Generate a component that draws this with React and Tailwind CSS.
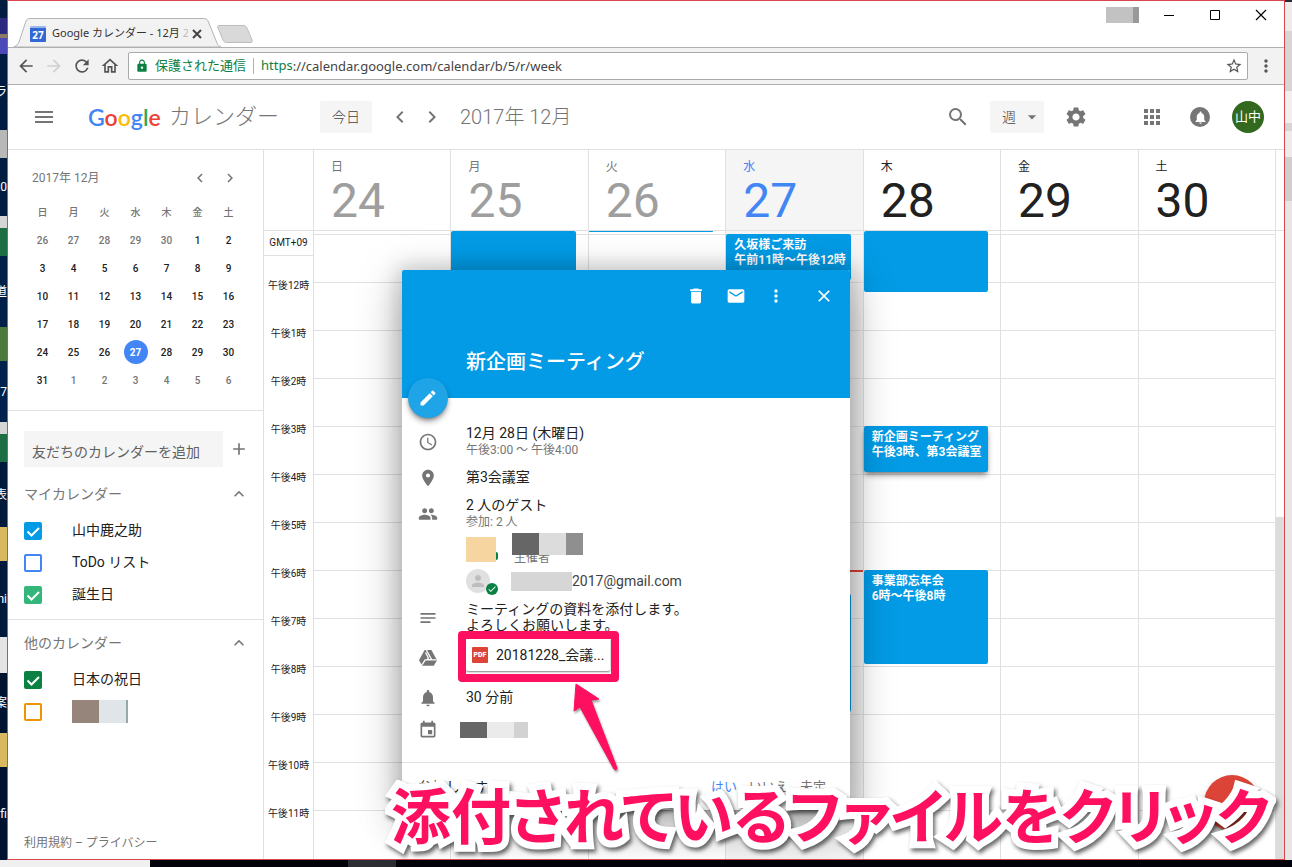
import React, { useState } from 'react';
import {
  MdAdd,
  MdApps,
  MdArrowBack,
  MdArrowDropDown,
  MdArrowForward,
  MdCheck,
  MdChevronLeft,
  MdChevronRight,
  MdClose,
  MdDelete,
  MdEdit,
  MdEmail,
  MdEvent,
  MdExpandLess,
  MdLock,
  MdMenu,
  MdMoreVert,
  MdNotes,
  MdNotifications,
  MdOutlineHome,
  MdPeople,
  MdPerson,
  MdPlace,
  MdRefresh,
  MdSchedule,
  MdSearch,
  MdSettings,
  MdStarBorder
} from 'react-icons/md';

const weekdays = ['日', '月', '火', '水', '木', '金', '土'];

const miniWeeks = [
  [26, 27, 28, 29, 30, 1, 2],
  [3, 4, 5, 6, 7, 8, 9],
  [10, 11, 12, 13, 14, 15, 16],
  [17, 18, 19, 20, 21, 22, 23],
  [24, 25, 26, 27, 28, 29, 30],
  [31, 1, 2, 3, 4, 5, 6]
];

// top / height are pixels from the upper edge of the visible grid
const days = [
  { name: '日', date: 24, state: 'past', events: [] },
  { name: '月', date: 25, state: 'past', events: [{ top: 0, height: 90 }] },
  { name: '火', date: 26, state: 'past', events: [{ top: 0, height: 1 }] },
  {
    name: '水',
    date: 27,
    state: 'today',
    events: [
      { top: 3, height: 46, title: '久坂様ご来訪', time: '午前11時～午後12時' },
      { top: 363, height: 118 }
    ]
  },
  {
    name: '木',
    date: 28,
    state: 'future',
    events: [
      { top: 0, height: 61 },
      { top: 195, height: 46, title: '新企画ミーティング', time: '午後3時、第3会議室', raised: true },
      { top: 339, height: 94, title: '事業部忘年会', time: '6時～午後8時' }
    ]
  },
  { name: '金', date: 29, state: 'future', events: [] },
  { name: '土', date: 30, state: 'future', events: [] }
];

const dayColors = {
  past: { name: 'text-[#757575]', date: 'text-[#9e9e9e]', bg: '' },
  today: { name: 'text-[#4285f4]', date: 'text-[#4285f4]', bg: 'bg-[#f5f5f5]' },
  future: { name: 'text-[#212121]', date: 'text-[#212121]', bg: '' }
};

const hours = ['12', '1', '2', '3', '4', '5', '6', '7', '8', '9', '10', '11'];

const leftDesktop = [
  { h: 'h-[18px]', c: 'bg-[#001c40]' },
  { h: 'h-4', c: 'bg-[#2b2a80]' },
  { h: 'h-1', c: 'bg-[#8d7a68]' },
  { h: 'h-4', c: 'bg-[#4c48b8]' },
  { h: 'h-[76px]', c: 'bg-[#001c40]', t: 'ラ' },
  { h: 'h-7', c: 'bg-[#b8b8b8]' },
  { h: 'h-[58px]', c: 'bg-[#001d42]', t: '20' },
  { h: 'h-3', c: 'bg-[#d5d5d5]' },
  { h: 'h-7', c: 'bg-[#1d6e42]' },
  { h: 'h-[71px]', c: 'bg-[#00204a]', t: '道' },
  { h: 'h-[34px]', c: 'bg-[#4d7a3c]' },
  { h: 'h-[61px]', c: 'bg-[#00224c]', t: '17' },
  { h: 'h-3', c: 'bg-[#d5d5d5]' },
  { h: 'h-7', c: 'bg-[#1d6e42]' },
  { h: 'h-[65px]', c: 'bg-[#001a3c]', t: '表' },
  { h: 'h-[34px]', c: 'bg-[#d8b95f]' },
  { h: 'h-[76px]', c: 'bg-[#001a3c]', t: 'ni' },
  { h: 'h-9', c: 'bg-[#e4e4e4]' },
  { h: 'h-[60px]', c: 'bg-[#00142f]', t: '案' },
  { h: 'h-[34px]', c: 'bg-[#d8b95f]' },
  { h: 'flex-1', c: 'bg-[#001230]', t: 'fi' }
];

const Segments = ({ list, className }) => (
  <div className={`flex shrink-0 flex-col overflow-hidden ${className}`} aria-hidden="true">
    {list.map((s, i) => (
      <div key={i} className={`${s.h} ${s.c} flex shrink-0 items-center justify-end overflow-hidden text-xs text-white`}>
        {s.t}
      </div>
    ))}
  </div>
);

const rightDesktop = [
  { h: 'h-0.5', c: 'bg-[#2c2c34]' },
  { h: 'h-[29px]', c: 'bg-[#ececec]' },
  { h: 'h-[60px]', c: 'bg-[#d6d6d6]' },
  { h: 'h-8', c: 'bg-[#f0f0f0]' },
  { h: 'h-2', c: 'bg-[#d6d6d6]' },
  { h: 'h-[26px]', c: 'bg-[#ececec]' },
  { h: 'h-11', c: 'bg-[#cfcfcf]' },
  { h: 'flex-1', c: 'bg-[#e6e6e6]' }
];

const IconButton = ({ label, className = '', children }) => (
  <button aria-label={label} className={`flex items-center justify-center ${className}`}>
    {children}
  </button>
);

const TitleBar = () => (
  <div className="flex h-[46px] justify-between bg-white">
    <div className="flex items-end">
      <div className="relative z-10 ml-[6px] h-[29px] w-[207px]">
        <svg className="absolute inset-0" width="207" height="29" viewBox="0 0 207 29">
          <path d="M0 28.5 C3 28 4 26 5 24 L12 3 C13 1 14 .5 16 .5 H189 C192 .5 193 1 194 3 L203 25 C204 27.500 205 28.500 207 28.500 V29 H0Z" fill="#f2f2f2" stroke="#b4b4b4" />
        </svg>
        <div className="relative flex h-full items-center pt-0.5 pl-4 font-['Noto_Sans','Noto_Sans_CJK_JP',sans-serif]">
          <span className="flex size-4 items-center justify-center rounded-[1px] border-t-2 border-[#9db8e8] bg-[#3367d6] text-[10px] leading-none font-bold text-white">27</span>
          <span className="ml-[6px] w-[136px] overflow-hidden text-[11px] whitespace-nowrap text-[#333]">
            Google カレンダー - 12月 <span className="text-[#bbb]">2</span>
          </span>
          <IconButton label="タブを閉じる" className="ml-1 text-[#444]">
            <svg width="10" height="10" viewBox="0 0 10 10" stroke="currentColor" strokeWidth="2">
              <path d="M1 1 9 9M9 1 1 9" />
            </svg>
          </IconButton>
        </div>
      </div>
      <button aria-label="新しいタブ" className="mb-1 -ml-1">
        <svg width="36" height="18" viewBox="0 0 36 18">
          <path d="M2 .5H26C28 .5 29 1 30 3L35 15C35.500 17 35 17.500 33 17.500H10C8 17.500 7 17 6 15L1 3C.5 1 1 .5 2 .5Z" fill="#d9d9d9" stroke="#bdbdbd" />
        </svg>
      </button>
    </div>
    <div className="flex h-7 items-center">
      <div className="mr-6 flex h-4" aria-hidden="true">
        <span className="w-[27px] bg-[#c2c2c2]" />
        <span className="w-1.5 bg-[#999]" />
      </div>
      <div className="flex gap-[34px] pr-[17px] text-black">
        <IconButton label="最小化">
          <svg width="12" height="12" viewBox="0 0 12 12" stroke="currentColor"><path d="M1 6.500H11" /></svg>
        </IconButton>
        <IconButton label="最大化">
          <svg width="12" height="12" viewBox="0 0 12 12" stroke="currentColor" fill="none"><path d="M1.500 1.500H10.500V10.500H1.500Z" /></svg>
        </IconButton>
        <IconButton label="閉じる">
          <svg width="12" height="12" viewBox="0 0 12 12" stroke="currentColor" strokeWidth="1.2"><path d="M1 1 11 11M11 1 1 11" /></svg>
        </IconButton>
      </div>
    </div>
  </div>
);

const AddressBar = () => (
  <div className="flex h-[38px] items-center border-y border-[#b0b0b0] bg-[#f2f2f2] pl-2 text-[#555] font-['Noto_Sans','Noto_Sans_CJK_JP',sans-serif]">
    <div className="flex gap-2">
      <IconButton label="戻る"><MdArrowBack size={20} /></IconButton>
      <IconButton label="進む" className="text-[#d0d0d0]"><MdArrowForward size={20} /></IconButton>
      <IconButton label="再読み込み"><MdRefresh size={20} /></IconButton>
      <IconButton label="ホーム"><MdOutlineHome size={20} /></IconButton>
    </div>
    <div className="ml-2 flex h-7 flex-1 items-center rounded-[2px] border border-[#a9a9a9] bg-white pr-1 pl-[6px]">
      <MdLock size={14} className="text-[#0b8043]" />
      <span className="ml-1.5 text-[13px] text-[#0b8043]">保護された通信</span>
      <span className="mx-[7px] h-4 w-px bg-[#b0b0b0]" />
      <label htmlFor="address" className="text-[13px] text-[#0b8043]">https</label>
      <input
        id="address"
        aria-label="アドレス"
        className="h-6 flex-1 text-[13px] text-[#444]"
        defaultValue="://calendar.google.com/calendar/b/5/r/week"
      />
      <IconButton label="ブックマーク"><MdStarBorder size={18} /></IconButton>
    </div>
    <IconButton label="メニュー" className="w-9"><MdMoreVert size={20} /></IconButton>
  </div>
);

const GoogleLogo = () => (
  <span className="w-[75px] font-['Lato',sans-serif] text-[23px] leading-8 font-semibold">
    <span className="text-[#4285f4]">G</span>
    <span className="text-[#ea4335]">o</span>
    <span className="text-[#fbbc05]">o</span>
    <span className="text-[#4285f4]">g</span>
    <span className="text-[#34a853]">l</span>
    <span className="text-[#ea4335]">e</span>
  </span>
);

const Header = () => (
  <header className="flex h-[65px] items-center border-b border-[#e0e0e0] pl-6 text-[#757575]">
    <IconButton label="メインメニュー"><MdMenu size={24} /></IconButton>
    <div className="ml-8 flex w-[232px] items-center gap-1.5">
      <GoogleLogo />
      <span className="text-[22px] leading-8 font-light">カレンダー</span>
    </div>
    <button className="h-8 w-[52px] rounded-[2px] bg-[#f5f5f5] text-sm font-light text-[#424242]">今日</button>
    <div className="ml-4 flex gap-2">
      <IconButton label="前の週"><MdChevronLeft size={24} /></IconButton>
      <IconButton label="次の週"><MdChevronRight size={24} /></IconButton>
    </div>
    <h1 className="ml-4 flex-1 text-xl font-light">2017年 12月</h1>
    <IconButton label="検索"><MdSearch size={24} /></IconButton>
    <div className="relative ml-5 flex items-center">
      <select aria-label="表示" className="h-8 w-[54px] appearance-none rounded-[2px] bg-[#f5f5f5] pl-3 text-sm font-light text-[#424242]">
        <option>週</option>
      </select>
      <MdArrowDropDown size={20} className="pointer-events-none absolute right-0.5" />
    </div>
    <IconButton label="設定" className="ml-5"><MdSettings size={24} /></IconButton>
    <IconButton label="アプリ" className="ml-[52px]"><MdApps size={24} /></IconButton>
    <IconButton label="お知らせ" className="ml-[26px] size-5 rounded-full bg-[#757575] text-white">
      <MdNotifications size={15} />
    </IconButton>
    <button className="mr-5 ml-[22px] size-8 rounded-full bg-[#33691e] text-[13px] text-white">山中</button>
  </header>
);

const MiniCalendar = () => (
  <section className="px-[19px] pt-4">
    <div className="flex h-6 items-center justify-between px-[5px] text-[#757575]">
      <h2 className="text-xs">2017年 12月</h2>
      <div className="flex gap-3">
        <IconButton label="前の月"><MdChevronLeft size={18} /></IconButton>
        <IconButton label="次の月"><MdChevronRight size={18} /></IconButton>
      </div>
    </div>
    <table className="mt-2 w-[217px] table-fixed text-center text-[10px] font-medium text-[#212121]">
      <thead>
        <tr className="h-7 text-[#757575]">
          {weekdays.map((d) => (
            <th key={d} className="p-0 font-medium">{d}</th>
          ))}
        </tr>
      </thead>
      <tbody>
        {miniWeeks.map((week, r) => (
          <tr key={r} className="h-7">
            {week.map((d, c) => {
              const outside = (r === 0 && d > 20) || (r === 5 && d < 10);
              const today = r === 4 && d === 27;
              return (
                <td key={c} className={`p-0 ${outside ? 'text-[#757575]' : ''}`}>
                  {today ? (
                    <span className="mx-auto flex size-6 items-center justify-center rounded-full bg-[#4285f4] font-bold text-white">{d}</span>
                  ) : d}
                </td>
              );
            })}
          </tr>
        ))}
      </tbody>
    </table>
  </section>
);

const CalendarItem = ({ initial, box, label, children }) => {
  const [on, setOn] = useState(initial);
  return (
    <label className="flex h-8 items-center text-sm text-[#212121]">
      <span className="relative mt-0.5 flex size-[18px] text-white">
        <input
          type="checkbox"
          aria-label={label}
          checked={on}
          onChange={() => setOn(!on)}
          className={`size-[18px] appearance-none rounded-[2px] border-2 ${box}`}
        />
        {on && (
          <svg className="pointer-events-none absolute inset-0" width="18" height="18" viewBox="0 0 18 18" fill="none" stroke="currentColor" strokeWidth="2">
            <path d="M3.500 9.500 7.500 13.500 15 6" />
          </svg>
        )}
      </span>
      <span className="ml-[30px]">{children}</span>
    </label>
  );
};

const SectionHead = ({ title }) => (
  <div className="flex h-6 items-center justify-between text-[#757575]">
    <h2 className="text-sm">{title}</h2>
    <IconButton label={`${title}を折りたたむ`}><MdExpandLess size={20} /></IconButton>
  </div>
);

const Sidebar = () => (
  <aside className="flex w-64 shrink-0 flex-col border-r border-[#e0e0e0]">
    <MiniCalendar />
    <section className="mt-4 border-t border-[#e0e0e0] pt-5 pr-[14px] pb-[9px] pl-4">
      <div className="flex h-9 items-center justify-between">
        <input
          aria-label="友だちのカレンダーを追加"
          placeholder="友だちのカレンダーを追加"
          className="h-9 w-[199px] bg-[#f5f5f5] px-2 pt-1.5 text-sm placeholder:text-[#616161]"
        />
        <IconButton label="追加" className="text-[#757575]"><MdAdd size={20} /></IconButton>
      </div>
      <div className="mt-[15px]"><SectionHead title="マイカレンダー" /></div>
      <div className="mt-2">
        <CalendarItem initial box="border-[#039be5] checked:bg-[#039be5]">山中鹿之助</CalendarItem>
        <CalendarItem initial={false} box="border-[#4285f4] checked:bg-[#4285f4]">ToDo リスト</CalendarItem>
        <CalendarItem initial box="border-[#33b679] checked:bg-[#33b679]">誕生日</CalendarItem>
      </div>
    </section>
    <section className="border-t border-[#e0e0e0] pt-[11px] pr-[14px] pl-4">
      <SectionHead title="他のカレンダー" />
      <div className="mt-2">
        <CalendarItem initial box="border-[#0b8043] checked:bg-[#0b8043]">日本の祝日</CalendarItem>
        <CalendarItem initial={false} label="カレンダー" box="border-[#f09300] checked:bg-[#f09300]">
          <span className="flex h-[23px]">
            <span className="w-[27px] bg-[#96857b]" />
            <span className="w-[27px] bg-[#e0e5ea]" />
            <span className="w-0.5 bg-[#94aaa8]" />
          </span>
        </CalendarItem>
      </div>
    </section>
    <footer className="mt-auto px-4 pb-2 text-xs text-[#757575]">
      <a href="#terms">利用規約</a> – <a href="#privacy">プライバシー</a>
    </footer>
  </aside>
);

const DayHeads = () => (
  <div className="flex h-[81px] border-b border-[#e0e0e0]">
    <div className="w-[50px] shrink-0 border-r border-[#e0e0e0]" />
    {days.map((d) => (
      <div key={d.date} className={`flex-1 border-r border-[#e0e0e0] pt-[9px] pl-[17px] ${dayColors[d.state].bg}`}>
        <div className={`text-xs leading-4 ${dayColors[d.state].name}`}>{d.name}</div>
        <div className={`text-5xl leading-[52px] ${dayColors[d.state].date}`}>{d.date}</div>
      </div>
    ))}
    <div className="w-2 shrink-0" />
  </div>
);

const EventBlock = ({ event }) => (
  <button
    aria-label={event.title ? undefined : '予定'}
    style={{ top: event.top, height: event.height }}
    className={`absolute right-3 left-0 flex flex-col items-start overflow-hidden rounded-[2px] bg-[#039be5] text-left text-xs leading-[15px] font-bold whitespace-nowrap text-white ${event.title ? 'pt-1 pl-2' : ''} ${event.raised ? 'shadow-md shadow-black/40' : ''}`}
  >
    <span>{event.title}</span>
    <span>{event.time}</span>
  </button>
);

const PopupRow = ({ icon, iconClass = '', className = '', children }) => (
  <div className={`flex ${className}`}>
    <span className={`mr-7 flex size-5 shrink-0 justify-center text-[#757575] ${iconClass}`}>{icon}</span>
    <div className="min-w-0 flex-1">{children}</div>
  </div>
);

const DriveIcon = () => (
  <svg width="20" height="20" viewBox="0 0 20 20" fill="currentColor">
    <path d="M6.600 2H13.400L19 12.200 15.800 17.800H4.200L1 12.200Z" />
    <path d="M8.300 2 13.600 11.600H9.300L10.300 9.700 7.500 4.500M3.800 17.200 7.200 11.900H18.600" fill="none" stroke="#fff" strokeWidth="1.3" />
  </svg>
);

const EventPopup = () => (
  <div
    role="dialog"
    aria-label="新企画ミーティング"
    className="absolute top-[39px] left-[138px] z-20 w-[448px] rounded-[2px] bg-white text-sm leading-5 text-[#212121] shadow-[0_24px_38px_3px_rgba(0,0,0,0.14),0_9px_46px_8px_rgba(0,0,0,0.12),0_0_20px_4px_rgba(0,0,0,0.16)]"
  >
    <div className="relative h-32 rounded-t-[2px] bg-[#039be5] text-white">
      <div className="flex justify-end pt-4 pr-4">
        <IconButton label="削除" className="mr-5"><MdDelete size={20} /></IconButton>
        <IconButton label="メール" className="mr-5"><MdEmail size={20} /></IconButton>
        <IconButton label="その他" className="mr-7"><MdMoreVert size={20} /></IconButton>
        <IconButton label="閉じる"><MdClose size={20} /></IconButton>
      </div>
      <h2 className="mt-10 pl-16 text-xl leading-8 font-medium">新企画ミーティング</h2>
      <IconButton label="編集" className="absolute -bottom-5 left-[6px] size-10 rounded-full bg-[#20a4e8] shadow-md shadow-black/40">
        <MdEdit size={20} />
      </IconButton>
    </div>
    <div className="pt-[25px] pl-4">
      <PopupRow icon={<MdSchedule size={20} />} iconClass="mt-[9px]" className="h-11">
        <div>12月 28日 (木曜日)</div>
        <div className="text-xs leading-[14px] text-[#757575]">午後3:00 ～ 午後4:00</div>
      </PopupRow>
      <PopupRow icon={<MdPlace size={20} />} iconClass="mt-px" className="h-7">
        第3会議室
      </PopupRow>
      <PopupRow icon={<MdPeople size={20} />} iconClass="mt-[9px]" className="h-[106px]">
        <div>2 人のゲスト</div>
        <div className="text-xs leading-[14px] text-[#757575]">参加: 2 人</div>
        <div className="mt-1 flex h-8">
          <span className="relative mt-1 h-[25px] w-[30px] bg-[#f6d5a0]">
            <span className="absolute right-[-2px] bottom-0.5 h-2 w-0.5 rounded-r bg-[#0b8043]" />
          </span>
          <div className="relative ml-4 pt-[18px] pl-0.5 text-xs leading-[14px] text-[#757575]">
            主催者
            <span className="absolute top-0 left-0 flex h-[22px]">
              <span className="w-[27px] bg-[#666]" />
              <span className="w-[27px] bg-[#dcdcdc]" />
              <span className="w-[17px] bg-[#8f8f8f]" />
            </span>
          </div>
        </div>
        <div className="mt-1 flex h-6 items-center">
          <span className="relative flex size-6 items-center justify-center rounded-full bg-[#e0e0e0] text-[#bdbdbd]">
            <MdPerson size={18} />
            <span className="absolute -right-2 -bottom-0.5 flex size-3 items-center justify-center rounded-full bg-[#0b8043] text-white">
              <MdCheck size={10} />
            </span>
          </span>
          <span className="ml-[21px] h-[19px] w-[61px] bg-[#d6d6d6]" />
          <span className="text-[#424242]">2017@gmail.com</span>
        </div>
      </PopupRow>
      <PopupRow icon={<MdNotes size={20} />} iconClass="mt-[7px]" className="h-[37px]">
        <p className="leading-4">
          ミーティングの資料を添付します。
          <br />
          よろしくお願いします。
        </p>
      </PopupRow>
      <PopupRow icon={<DriveIcon />} iconClass="mt-[10px]" className="h-12">
        <a href="#attachment" className="flex h-[33px] w-36 items-center gap-2 rounded-[2px] bg-white pl-[6px] shadow-[0_1px_2px_rgba(0,0,0,0.5)]">
          <span className="flex size-4 items-center justify-center rounded-[1px] bg-[#db4437] pt-0.5 text-[7px] leading-none font-black text-white">PDF</span>
          <span>20181228_会議...</span>
        </a>
      </PopupRow>
      <PopupRow icon={<MdNotifications size={20} />} iconClass="mt-0.5" className="h-[34px]">
        <div className="pt-px">30 分前</div>
      </PopupRow>
      <PopupRow icon={<MdEvent size={20} />} className="h-[42px]">
        <span className="mt-0.5 -ml-[6px] flex h-4">
          <span className="w-[27px] bg-[#666]" />
          <span className="w-[27px] bg-[#ebebeb]" />
          <span className="w-[14px] bg-[#d2d2d2]" />
        </span>
      </PopupRow>
    </div>
    <div className="flex h-12 items-center border-t border-[#e0e0e0] pr-6 pl-4">
      <span className="flex-1">参加しますか?</span>
      <div className="flex gap-3 text-[13px] text-[#757575]">
        <button className="text-[#4285f4]">はい</button>
        <button>いいえ</button>
        <button>未定</button>
      </div>
    </div>
    <div className="pointer-events-none absolute top-[361px] left-14 h-[51px] w-[161px] rounded-[4px] border-8 border-[#ff0f5f]" />
    <svg className="pointer-events-none absolute top-[412px] left-[168px] drop-shadow-[1px_2px_1px_rgba(0,0,0,0.4)]" width="52" height="90" viewBox="0 0 52 90">
      <path d="M6 2 29 17 21 18 47 86 46 88 44 87 10 25 4 29Z" fill="#ff0f5f" stroke="#ff0f5f" strokeLinejoin="round" />
    </svg>
  </div>
);

const WeekGrid = () => (
  <div className="relative flex flex-1 overflow-hidden">
    <div className="flex w-[50px] shrink-0 flex-col border-r border-[#e0e0e0] text-center text-[10px] text-[#212121]">
      <div className="mb-[5px] h-[25px] border-b border-[#e0e0e0] leading-6">GMT+09</div>
      {hours.map((h) => (
        <div key={h} className="flex h-12 items-center justify-center">午後{h}時</div>
      ))}
    </div>
    {days.map((d) => (
      <div key={d.date} className={`relative flex-1 border-r border-[#e0e0e0] ${dayColors[d.state].bg}`}>
        <div className="h-1 border-b border-[#e0e0e0]" />
        {hours.map((h) => (
          <div key={h} className="h-12 border-b border-[#e0e0e0]" />
        ))}
        <div className="h-12" />
        {d.state === 'today' && <div className="absolute inset-x-0 top-[339px] h-0.5 bg-[#db4437]" />}
        {d.events.map((e, i) => (
          <EventBlock key={i} event={e} />
        ))}
      </div>
    ))}
    <div className="flex w-2 shrink-0 flex-col justify-end">
      <div className="h-[342px] bg-[#dcdcdc]" />
    </div>
    <EventPopup />
    <button aria-label="予定を作成" className="absolute right-6 bottom-7 flex size-14 items-center justify-center rounded-full bg-[#db4437] text-white shadow-lg shadow-black/40">
      <MdAdd size={24} />
    </button>
  </div>
);

const App = () => (
  <div className="relative flex min-h-screen flex-col overflow-hidden bg-white font-['Roboto','Noto_Sans_CJK_JP',sans-serif]">
    <div className="flex flex-1">
      <Segments list={leftDesktop} className="w-[7px]" />
      <div className="flex min-w-0 flex-1 flex-col border border-[#d9474d] bg-white">
        <TitleBar />
        <AddressBar />
        <Header />
        <div className="flex flex-1">
          <Sidebar />
          <main className="flex min-w-0 flex-1 flex-col">
            <DayHeads />
            <WeekGrid />
          </main>
        </div>
      </div>
      <Segments list={rightDesktop} className="w-[7px]" />
    </div>
    <div className="flex h-[7px] bg-[#02030a]" aria-hidden="true">
      <div className="w-[150px] bg-[#f0f0f0]" />
      <div className="ml-[198px] w-12 bg-[#2c2c33]" />
    </div>
    <p className="pointer-events-none absolute bottom-[6px] left-[391px] z-30 text-[60px] leading-[84px] font-bold whitespace-nowrap text-[#ff0f5f] drop-shadow-[2px_3px_2px_rgba(0,0,0,0.6)] [font-feature-settings:'palt'] [-webkit-text-stroke:14px_white] [paint-order:stroke_fill]">
      添付されているファイルをクリック
    </p>
  </div>
);

export default App;
